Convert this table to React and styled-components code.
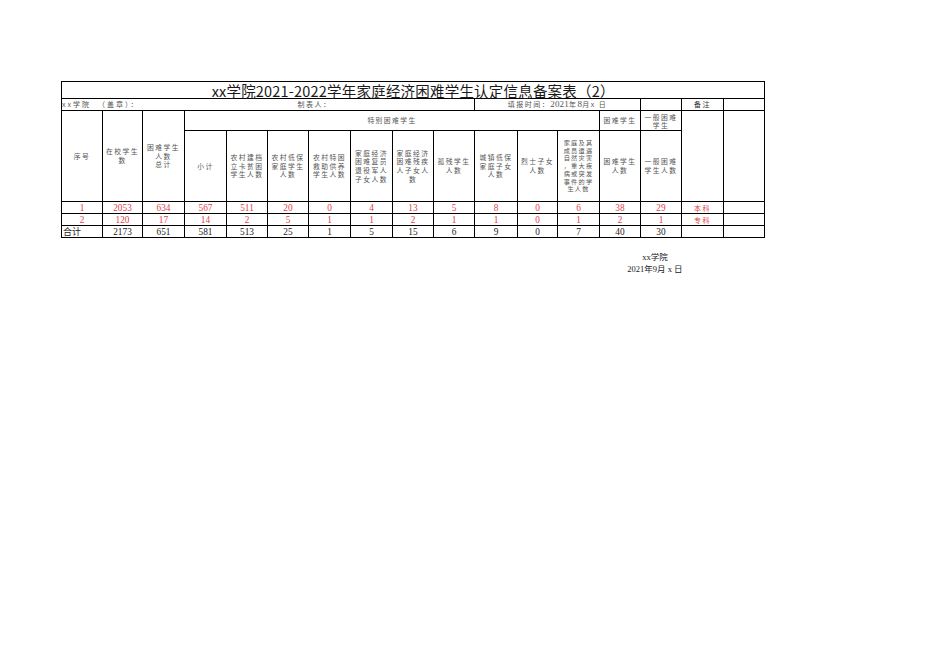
import React from 'react'
import styled, {createGlobalStyle} from 'styled-components'

const Global = createGlobalStyle`
  body {
    margin: 0;
    background: #fff;
    font-family: "Noto Sans CJK SC", "Liberation Sans", sans-serif;
  }
`

const Page = styled.div`
  width: 936px;
  height: 662px;
  padding: 81px 0 0 61px;
  box-sizing: border-box;
`

const Sheet = styled.table`
  border-collapse: collapse;
  table-layout: fixed;
  width: 703px;
`

const Cell = styled.td`
  border: 1px solid #000;
  padding: 0;
  height: ${p => p.$h || 11}px;
  font-size: 6px;
  line-height: 8px;
  text-align: ${p => p.$align || 'center'};
  vertical-align: middle;
  overflow: ${p => p.$clip === false ? 'visible' : 'hidden'};
  white-space: nowrap;
  ${p => p.$noRight && 'border-right: none;'}
  ${p => p.$noLeft && 'border-left: none;'}
`

const Title = styled.div`
  font-size: 14.5px;
  color: #1a1a1a;
  line-height: 15px;
  letter-spacing: 0.2px;
`

const Label = styled.span`
  font-size: 7px;
  letter-spacing: ${p => p.$ls || 1.5}px;
  color: ${p => p.$dark ? '#333' : '#555'};
  line-height: 9px;
  padding-left: ${p => p.$pad || 0}px;
`

const Digits = styled.span`
  font-family: "Liberation Serif", serif;
  font-size: 9px;
  letter-spacing: 0.2px;
`

const Head = styled.div`
  font-size: ${p => p.$small ? 6.2 : 6.8}px;
  letter-spacing: ${p => p.$small ? 1.2 : 1.4}px;
  color: #555;
  line-height: ${p => p.$lh || 8.7}px;
  white-space: nowrap;
`

const Num = styled.span`
  font-family: "Liberation Serif", "Noto Sans CJK SC", serif;
  font-size: 9.3px;
  line-height: 10px;
  color: ${p => p.$red ? '#e2404a' : '#222'};
`

const Tag = styled.span`
  font-size: 7px;
  letter-spacing: 1.5px;
  color: #e2404a;
  line-height: 10px;
`

const Sum = styled.span`
  font-size: 9px;
  color: #222;
  line-height: 10px;
  padding-left: 1px;
`

const Footer = styled.div`
  width: 100px;
  margin: 13px 0 0 544px;
  display: flex;
  flex-direction: column;
  align-items: center;
  font-family: "Liberation Serif", "Noto Sans CJK SC", serif;
  font-size: 8.5px;
  line-height: 12px;
  color: #222;
`

const widths = [41, 40, 42, 42, 41, 41, 42, 42, 41, 41, 43, 40, 42, 41, 41, 42, 41]

const subHeads = [
    ['小计'],
    ['农村建档', '立卡贫困', '学生人数'],
    ['农村低保', '家庭学生', '人数'],
    ['农村特困', '救助供养', '学生人数'],
    ['家庭经济', '困难复员', '退役军人', '子女人数'],
    ['家庭经济', '困难残疾', '人子女人', '数'],
    ['孤残学生', '人数'],
    ['城镇低保', '家庭子女', '人数'],
    ['烈士子女', '人数'],
    ['家庭及其', '成员遭遇', '自然灾害', '，重大疾', '病或突发', '事件的学', '生人数'],
    ['困难学生', '人数'],
    ['一般困难', '学生人数'],
]

const rows = [
    {no: '1', vals: [2053, 634, 567, 511, 20, 0, 4, 13, 5, 8, 0, 6, 38, 29], tag: '本科'},
    {no: '2', vals: [120, 17, 14, 2, 5, 1, 1, 2, 1, 1, 0, 1, 2, 1], tag: '专科'},
]

const total = [2173, 651, 581, 513, 25, 1, 5, 15, 6, 9, 0, 7, 40, 30]

const Lines = ({lines, lh, small}) => (
    <Head $lh={lh} $small={small}>
        {lines.map((l, i) => <div key={i}>{l}</div>)}
    </Head>
)

export default function App() {
    return (
        <Page>
            <Global/>
            <Sheet>
                <colgroup>
                    {widths.map((w, i) => <col key={i} style={{width: w}}/>)}
                </colgroup>
                <tbody>
                <tr>
                    <Cell colSpan={17} $h={16} $clip={false}>
                        <Title>xx学院2021-2022学年家庭经济困难学生认定信息备案表（2）</Title>
                    </Cell>
                </tr>
                <tr>
                    <Cell colSpan={5} $align="left" $noRight><Label $ls={2}>xx学院&nbsp;&nbsp;（盖章）：</Label></Cell>
                    <Cell colSpan={5} $align="left" $noLeft><Label $pad={30}>制表人：</Label></Cell>
                    <Cell colSpan={4}>
                        <Label>填报时间：<Digits>2021</Digits>年<Digits>8</Digits>月x 日</Label>
                    </Cell>
                    <Cell/>
                    <Cell><Label $dark>备注</Label></Cell>
                    <Cell/>
                </tr>
                <tr>
                    <Cell rowSpan={2}><Lines lines={['序号']}/></Cell>
                    <Cell rowSpan={2}><Lines lines={['在校学生', '数']}/></Cell>
                    <Cell rowSpan={2}><Lines lines={['困难学生', '人数', '总计']}/></Cell>
                    <Cell colSpan={10} $h={19}><Lines lines={['特别困难学生']}/></Cell>
                    <Cell><Lines lines={['困难学生']}/></Cell>
                    <Cell><Lines lines={['一般困难', '学生']} lh={8}/></Cell>
                    <Cell rowSpan={2}/>
                    <Cell rowSpan={2}/>
                </tr>
                <tr>
                    {subHeads.map((s, i) => (
                        <Cell key={i} $h={70}>
                            <Lines lines={s} lh={s.length > 5 ? 7.7 : 8.7} small={s.length > 5}/>
                        </Cell>
                    ))}
                </tr>
                {rows.map(r => (
                    <tr key={r.no}>
                        <Cell><Num $red>{r.no}</Num></Cell>
                        {r.vals.map((v, i) => <Cell key={i}><Num $red>{v}</Num></Cell>)}
                        <Cell><Tag>{r.tag}</Tag></Cell>
                        <Cell/>
                    </tr>
                ))}
                <tr>
                    <Cell $align="left"><Sum>合计</Sum></Cell>
                    {total.map((v, i) => <Cell key={i}><Num>{v}</Num></Cell>)}
                    <Cell/>
                    <Cell/>
                </tr>
                </tbody>
            </Sheet>
            <Footer>
                <div>xx学院</div>
                <div>2021年9月 x 日</div>
            </Footer>
        </Page>
    )
}
